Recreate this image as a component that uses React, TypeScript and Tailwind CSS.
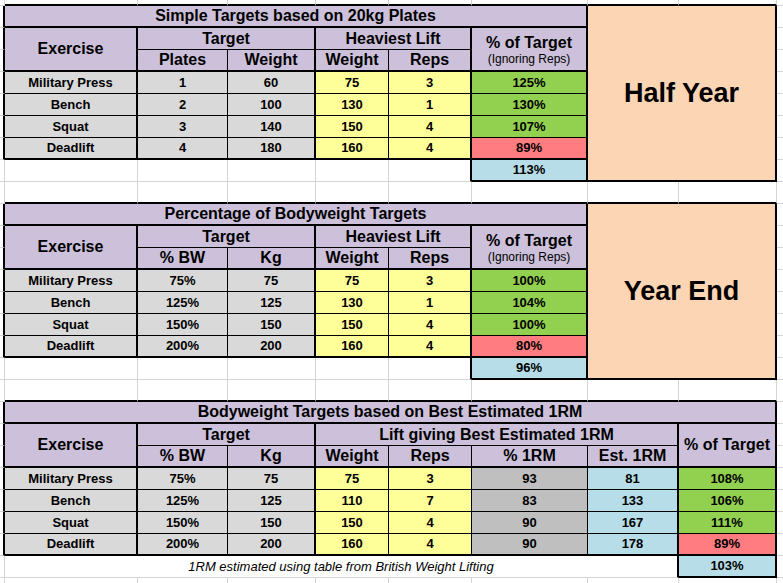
import type { ReactNode } from 'react'

// Excel-like sheet: 10 grid columns (margin, A..H, overflow), 22px rows

// border pieces (gridline / thin black / medium black)
const gr = 'border-r border-r-[#d4d4d4]'
const gb = 'border-b border-b-[#d4d4d4]'
const tr = 'border-r border-r-black'
const tb = 'border-b border-b-black'
const Tr = 'border-r-2 border-r-black'
const Tb = 'border-b-2 border-b-black'

// fills
const P = 'bg-[#ccc0da]'
const GY = 'bg-[#d9d9d9]'
const YL = 'bg-[#ffff99]'
const GN = 'bg-[#92d050]'
const RD = 'bg-[#ff7c80]'
const LB = 'bg-[#b7dee8]'
const PC = 'bg-[#fcd5b4]'
const DG = 'bg-[#bfbfbf]'

const head = 'text-[16px] font-bold'
const data = 'text-[13px] font-bold'

type CellSpec = { t?: ReactNode; c: string }
type TargetRow = [string, string, string, string, string, string, string]
type OneRmRow = [string, string, string, string, string, string, string, string, string]

function Cell({ t, c }: CellSpec) {
  return (
    <div className={`flex items-center justify-center overflow-hidden whitespace-nowrap text-black ${c}`}>
      {t}
    </div>
  )
}

const spacer = (): CellSpec[] => [
  { c: `${gr} ${gb}` },
  ...Array.from({ length: 8 }, () => ({ c: `${gr} ${Tb}` })),
  { c: gb },
]

const blank = (): CellSpec[] => [
  ...Array.from({ length: 9 }, () => ({ c: `${gr} ${gb}` })),
  { c: gb },
]

function targetBlock(title: string, box: string, sub: [string, string], rows: TargetRow[], total: string): CellSpec[] {
  const cells: CellSpec[] = [
    { c: `${Tr} ${gb}` },
    { t: title, c: `col-span-6 ${P} ${head} ${Tr} ${Tb}` },
    { t: box, c: `col-span-2 row-span-8 ${PC} text-[27px] font-bold ${Tr} ${Tb}` },
    { c: gb },

    { c: `${Tr} ${gb}` },
    { t: 'Exercise', c: `row-span-2 ${P} ${head} ${Tr} ${Tb}` },
    { t: 'Target', c: `col-span-2 ${P} ${head} ${Tr} ${tb}` },
    { t: 'Heaviest Lift', c: `col-span-2 ${P} ${head} ${Tr} ${tb}` },
    {
      t: (
        <>
          <span className="leading-[18px]">% of Target</span>
          <span className="text-[12px] leading-[14px] font-normal">(Ignoring Reps)</span>
        </>
      ),
      c: `row-span-2 flex-col pt-[2px] ${P} ${head} ${Tr} ${Tb}`,
    },
    { c: gb },

    { c: `${Tr} ${gb}` },
    { t: sub[0], c: `${P} ${head} ${tr} ${Tb}` },
    { t: sub[1], c: `${P} ${head} ${Tr} ${Tb}` },
    { t: 'Weight', c: `${P} ${head} ${tr} ${Tb}` },
    { t: 'Reps', c: `${P} ${head} ${Tr} ${Tb}` },
    { c: gb },
  ]

  rows.forEach(([name, b, c, d, e, pct, fill], i) => {
    const bot = i === rows.length - 1 ? Tb : tb
    cells.push(
      { c: `${Tr} ${gb}` },
      { t: name, c: `${GY} ${data} ${Tr} ${bot}` },
      { t: b, c: `${GY} ${data} ${tr} ${bot}` },
      { t: c, c: `${GY} ${data} ${Tr} ${bot}` },
      { t: d, c: `${YL} ${data} ${tr} ${bot}` },
      { t: e, c: `${YL} ${data} ${Tr} ${bot}` },
      { t: pct, c: `${fill} ${data} ${Tr} ${bot}` },
      { c: gb },
    )
  })

  cells.push(
    { c: `${gr} ${gb}` },
    { c: `${gr} ${gb}` },
    { c: `${gr} ${gb}` },
    { c: `${gr} ${gb}` },
    { c: `${gr} ${gb}` },
    { c: `${Tr} ${gb}` },
    { t: total, c: `${LB} ${data} ${Tr} ${Tb}` },
    { c: gb },
  )
  return cells
}

function oneRmBlock(rows: OneRmRow[]): CellSpec[] {
  const cells: CellSpec[] = [
    { c: `${Tr} ${gb}` },
    { t: 'Bodyweight Targets based on Best Estimated 1RM', c: `col-span-8 ${P} ${head} ${Tr} ${Tb}` },
    { c: gb },

    { c: `${Tr} ${gb}` },
    { t: 'Exercise', c: `row-span-2 ${P} ${head} ${Tr} ${Tb}` },
    { t: 'Target', c: `col-span-2 ${P} ${head} ${Tr} ${tb}` },
    { t: 'Lift giving Best Estimated 1RM', c: `col-span-4 ${P} ${head} ${Tr} ${tb}` },
    { t: '% of Target', c: `row-span-2 ${P} ${head} ${Tr} ${Tb}` },
    { c: gb },

    { c: `${Tr} ${gb}` },
    { t: '% BW', c: `${P} ${head} ${tr} ${Tb}` },
    { t: 'Kg', c: `${P} ${head} ${Tr} ${Tb}` },
    { t: 'Weight', c: `${P} ${head} ${tr} ${Tb}` },
    { t: 'Reps', c: `${P} ${head} ${tr} ${Tb}` },
    { t: '% 1RM', c: `${P} ${head} ${tr} ${Tb}` },
    { t: 'Est. 1RM', c: `${P} ${head} ${Tr} ${Tb}` },
    { c: gb },
  ]

  rows.forEach(([name, bw, kg, w, reps, pc, est, pct, fill], i) => {
    const bot = i === rows.length - 1 ? Tb : tb
    cells.push(
      { c: `${Tr} ${gb}` },
      { t: name, c: `${GY} ${data} ${Tr} ${bot}` },
      { t: bw, c: `${GY} ${data} ${tr} ${bot}` },
      { t: kg, c: `${GY} ${data} ${Tr} ${bot}` },
      { t: w, c: `${YL} ${data} ${tr} ${bot}` },
      { t: reps, c: `${YL} ${data} ${tr} ${bot}` },
      { t: pc, c: `${DG} ${data} ${tr} ${bot}` },
      { t: est, c: `${LB} ${data} ${Tr} ${bot}` },
      { t: pct, c: `${fill} ${data} ${Tr} ${bot}` },
      { c: gb },
    )
  })

  cells.push(
    { c: `${gr} ${gb}` },
    {
      t: '1RM estimated using table from British Weight Lifting',
      c: `col-span-7 text-[13px] italic text-[#222] ${Tr} ${gb}`,
    },
    { t: '103%', c: `${LB} ${data} ${Tr} ${Tb}` },
    { c: gb },
  )
  return cells
}

const simple: TargetRow[] = [
  ['Military Press', '1', '60', '75', '3', '125%', GN],
  ['Bench', '2', '100', '130', '1', '130%', GN],
  ['Squat', '3', '140', '150', '4', '107%', GN],
  ['Deadlift', '4', '180', '160', '4', '89%', RD],
]

const bodyweight: TargetRow[] = [
  ['Military Press', '75%', '75', '75', '3', '100%', GN],
  ['Bench', '125%', '125', '130', '1', '104%', GN],
  ['Squat', '150%', '150', '150', '4', '100%', GN],
  ['Deadlift', '200%', '200', '160', '4', '80%', RD],
]

const oneRm: OneRmRow[] = [
  ['Military Press', '75%', '75', '75', '3', '93', '81', '108%', GN],
  ['Bench', '125%', '125', '110', '7', '83', '133', '106%', GN],
  ['Squat', '150%', '150', '150', '4', '90', '167', '111%', GN],
  ['Deadlift', '200%', '200', '160', '4', '90', '178', '89%', RD],
]

export default function App() {
  const cells: CellSpec[] = [
    ...spacer(),
    ...targetBlock('Simple Targets based on 20kg Plates', 'Half Year', ['Plates', 'Weight'], simple, '113%'),
    ...spacer(),
    ...targetBlock('Percentage of Bodyweight Targets', 'Year End', ['% BW', 'Kg'], bodyweight, '96%'),
    ...spacer(),
    ...oneRmBlock(oneRm),
    ...blank(),
  ]

  return (
    <div className="h-[583px] w-full overflow-hidden bg-white font-['Liberation_Sans',Arial,sans-serif]">
      <div className="grid grid-cols-[5px_133px_90px_88px_73px_83px_116px_91px_98px_1fr] grid-rows-[6px_repeat(27,22px)]">
        {cells.map((cell, i) => (
          <Cell key={i} t={cell.t} c={cell.c} />
        ))}
      </div>
    </div>
  )
}
